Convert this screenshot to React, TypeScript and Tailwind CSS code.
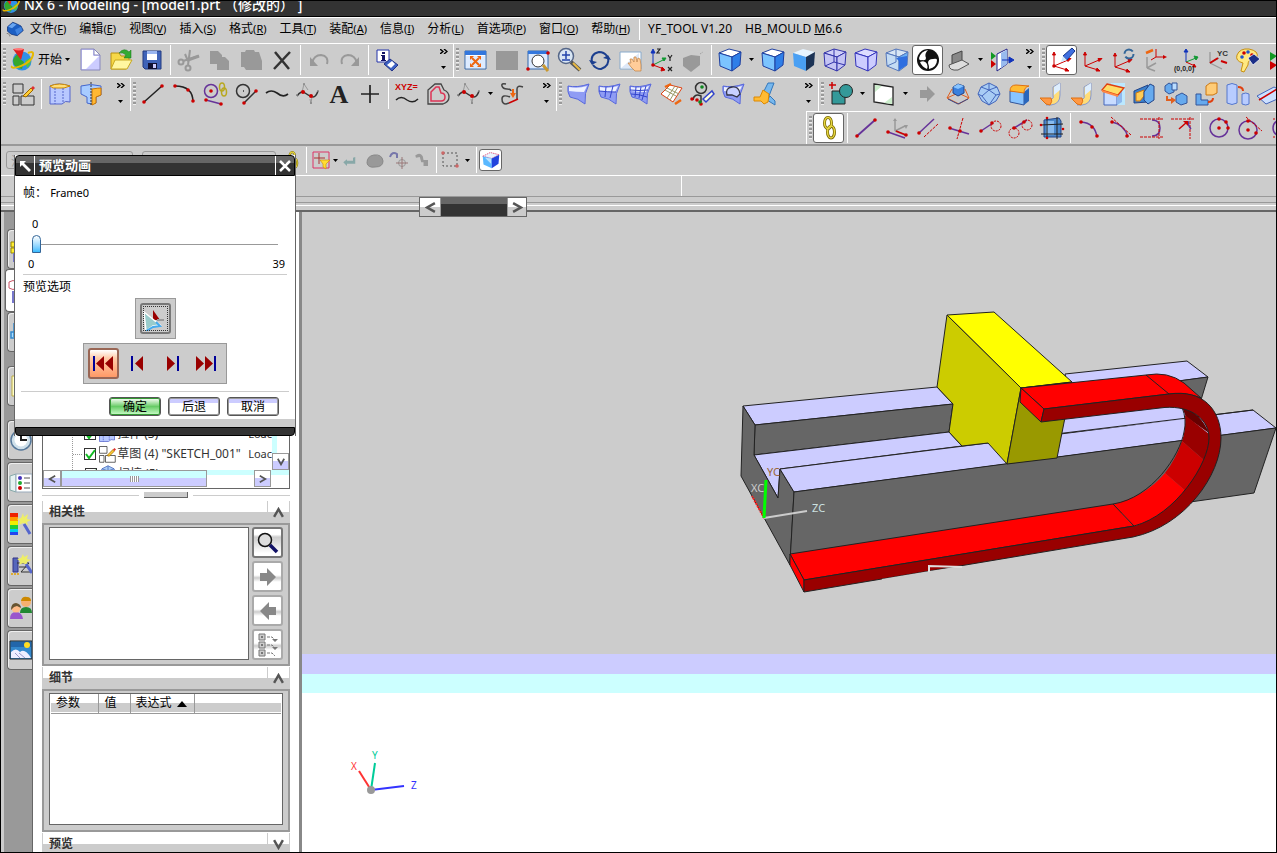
import { useState } from "react";
import type { ReactNode } from "react";

const RED = "#cc0000";
const GRAY = "#999999";
const PURPLE = "#663399";

function Dots({ at, r = 1.8, fill = RED }: { at: [number, number][]; r?: number; fill?: string }) {
  return (
    <>
      {at.map(([x, y]) => (
        <circle key={`${x}-${y}`} cx={x} cy={y} r={r} fill={fill} stroke="none" />
      ))}
    </>
  );
}

function Cube({ top, left, right, stroke = "#1f3f9f" }: { top: string; left: string; right: string; stroke?: string }) {
  return (
    <g stroke={stroke} strokeLinejoin="round">
      <path d="M1 5 11 1l12 3-9 5z" fill={top} />
      <path d="M1 5l13 4v14L2 18z" fill={left} />
      <path d="M14 9l9-5-1 13-8 6z" fill={right} />
    </g>
  );
}

function Arrow({ d, color, head }: { d: string; color: string; head: string }) {
  return (
    <>
      <path d={d} stroke={color} fill="none" />
      <path d={head} fill={color} stroke={color} />
    </>
  );
}

function Axes({ color = RED, x = 4, y = 18 }: { color?: string; x?: number; y?: number }) {
  return (
    <g transform={`translate(${x} ${y})`}>
      <Arrow d="M0 0v-12" color={color} head="M-1.500 -11h3L0 -14z" />
      <Arrow d="M0 0l14-6" color={color} head="M13 -7.500l4 0-3 3z" />
      <Arrow d="M0 0l13 4" color={color} head="M12 2l3 3-4 0z" />
    </g>
  );
}

function Sheet({ lines = "" }: { lines?: string }) {
  return (
    <>
      <path d="M1 4Q10 6 22 2 17 11 18 22 11 16 3 15 0 10 1 4z" fill="#8f9cf4" stroke="#5566dd" />
      <path d="M2 5Q11 7 20 4l-3 6Q9 10 2 9z" fill="#eef2ff" />
      <path d={lines} stroke="#3344cc" fill="none" />
    </>
  );
}

const icons: Record<string, ReactNode> = {
  orb: (
    <>
      <circle cx="12" cy="13" r="9.500" fill="#2f8fe8" />
      <path d="M4 10q4-6 8-5l-2 6 4 3-2 7Q3 20 3 12z" fill="#36a82c" />
      <path d="M15 13l5-3q2 6-3 10z" fill="#52c83c" />
      <path d="M2 18C-1 23 21 17 23 7c1-5-5-2-5-2" fill="none" stroke="#e6b800" strokeWidth="2" />
      <path d="M3 1l11 0-3 11z" fill="#e02020" />
      <path d="M3 1q6-2 11 0-5 3-11 0z" fill="#ff7777" />
    </>
  ),
  part: (
    <>
      <path d="M2 9l7-6 5 2 6 3 3 6-8 7-8-2-5-4z" fill="#1c5fc4" stroke="#113377" />
      <path d="M3 9l6-5 5 2-6 5z" fill="#6aa6f0" />
      <path d="M12 13l8-4 2 5-7 6z" fill="#3f83e0" />
      <path d="M1 18h3v3h3" stroke="#666" fill="none" strokeDasharray="2 1" />
    </>
  ),
  new: (
    <>
      <path d="M3 1h13l6 6v15H3z" fill="#ccccff" stroke="#8888bb" />
      <path d="M4 2h11v6h6L8 21H4z" fill="#fff" />
      <path d="M16 1v6h6z" fill="#fff" stroke="#8888bb" />
    </>
  ),
  open: (
    <>
      <path d="M2 5h8l2 3h8v4l-3 9H2z" fill="#f6d848" stroke="#b89010" />
      <path d="M6 12h17l-5 9H2z" fill="#fff6a0" stroke="#c8a820" />
      <path d="M10 5q5-6 10-1l2-2v8h-7l2-3q-3-3-7-2z" fill="#33aa33" stroke="#117711" strokeWidth=".5" />
    </>
  ),
  save: (
    <>
      <path d="M3 3h18v18H5l-2-2z" fill="#3f63b8" stroke="#223a80" />
      <path d="M7 3h10v9H7z" fill="#fff" />
      <path d="M7 3h10v3H7z" fill="#9ab6f0" />
      <path d="M8 15h9v6H8z" fill="#111133" />
      <path d="M13 16h3v4h-3z" fill="#ccccff" />
    </>
  ),
  cut: (
    <g stroke={GRAY} fill="none" strokeWidth="2">
      <circle cx="4" cy="14" r="2.500" />
      <circle cx="11" cy="20" r="2.500" />
      <path d="M6 13l16-5M11 17l2-15M11 13l-3-7" />
      <path d="M11 12l11-4" strokeWidth="3" />
    </g>
  ),
  copy: <path d="M2 3h8l4 4v2h3l4 4v9H9v-6H2z" fill={GRAY} />,
  paste: <path d="M2 4h4l1-2h8l1 2h4l3 9v9H7l-2-3H2z" fill={GRAY} />,
  del: <path d="M5 4l14 17M20 4L4 21" stroke="#333" strokeWidth="2.500" />,
  undo: (
    <>
      <path d="M5 15q2-8 9-8 8 1 6 9" stroke={GRAY} strokeWidth="2" fill="none" />
      <path d="M3 9v9h8z" fill={GRAY} />
    </>
  ),
  redo: (
    <>
      <path d="M19 15q-2-8-9-8-8 1-6 9" stroke={GRAY} strokeWidth="2" fill="none" />
      <path d="M21 9v9h-8z" fill={GRAY} />
    </>
  ),
  info: (
    <>
      <path d="M2 2h12v12H2z" fill="#fff" stroke="#2233aa" />
      <path d="M7 4h3v2H7zM6 7h4v5h1v1H6v-1h1V8H6z" fill="#111166" />
      <path d="M9 16l6-5 8 6-6 6z" fill="#3c62c4" stroke="#223388" />
      <path d="M12 17l5-4 3 3-4 4z" fill="#fff" />
    </>
  ),
  fit: (
    <>
      <path d="M1 3h21v18H1z" fill="#fff" stroke="#3366aa" />
      <path d="M1 3h21v4H1z" fill="#3377dd" />
      <path d="M2 8h19v12H2z" fill="#ddebff" />
      <path d="M8 10l7 7M15 10l-7 7" stroke="#ee6611" strokeWidth="2" />
      <path d="M6 8h4l-4 4zM17 8h-4l4 4zM6 19h4l-4-4zM17 19h-4l4-4z" fill="#ee6611" />
    </>
  ),
  grayRect: <path d="M1 3h22v19H1z" fill={GRAY} />,
  zoomWindow: (
    <>
      <path d="M2 3h20v18H2z" fill="#ddebff" stroke="#3366aa" />
      <path d="M2 3h20v3H2z" fill="#3377dd" />
      <circle cx="12" cy="13" r="6" fill="#fff" stroke="#333" />
      <path d="M17 17l5 6" stroke="#c89830" strokeWidth="3" />
      <Dots at={[[22, 5], [2, 21]]} />
    </>
  ),
  zoom: (
    <>
      <circle cx="9" cy="8" r="7.500" fill="#d8e6f4" stroke="#556688" strokeWidth="1.500" />
      <path d="M5 7h8M9 3v8M5 12h8" stroke="#2244aa" strokeWidth="1.500" />
      <path d="M14 14l9 8" stroke="#555" strokeWidth="4" />
      <path d="M16 15l7 7" stroke="#e8b840" strokeWidth="2" />
    </>
  ),
  rotate: (
    <g fill="none" stroke="#1c3f8f" strokeWidth="2">
      <path d="M4 15Q2 6 11 4q5 0 8 4M20 9q2 9-7 12-5 0-8-4" />
      <path d="M1 12l3 5 5-3zM23 12l-3-5-5 3z" fill="#1c3f8f" stroke="none" />
    </g>
  ),
  pan: (
    <>
      <path d="M1 4h21v17H1z" fill="#fff" stroke="#88aacc" />
      <path d="M2 20L20 5v15z" fill="#dde8f8" />
      <path d="M9 15l3 0-1-4 2 0 2 3 0-5 2 0 1 5 1-4 2 1 1 6 0 6-6 0-4-4z" fill="#ffcc99" stroke="#c08040" strokeWidth=".7" />
    </>
  ),
  triad: (
    <>
      <Arrow d="M3 17V4" color="#1133bb" head="M1 5h4L3 1z" />
      <Arrow d="M3 17l12-6" color="#119933" head="M12 10l4 0-2 3z" />
      <Arrow d="M3 17l11 4" color={RED} head="M12 19l3 3-4 1z" />
      <path d="M7 1h3L7 5h3M18 7l2 3 2-3M20 10v3M18 19l4 4M22 19l-4 4" stroke="#222" fill="none" strokeWidth="1.200" />
      <Dots at={[[3, 17]]} />
    </>
  ),
  perspective: (
    <>
      <path d="M2 10l8-3 9 1 0 9-9 7-8-6z" fill={GRAY} />
      <path d="M19 6l3-2" stroke={GRAY} strokeDasharray="1 1" />
    </>
  ),
  cube: <Cube top="#ffffff" left="#7cc4ff" right="#2f7fe8" />,
  cubeDark: <Cube top="#e6f4ff" left="#4aa0f4" right="#1c3355" stroke="none" />,
  cubeWire: (
    <>
      <Cube top="#d0d0f8" left="#c4c4f4" right="#c4c4f4" stroke="#3333aa" />
      <path d="M11 1v13M2 18l9-4 11 3" stroke="#3333aa" fill="none" />
    </>
  ),
  cubeLight: <Cube top="#ddddff" left="#ccccff" right="#ccccff" stroke="#3333bb" />,
  cubePart: (
    <>
      <Cube top="#d8e6f4" left="#c4dcf4" right="#6ab0f4" stroke="#5577bb" />
      <path d="M11 10l11-2v9l-8 5v-9z" fill="#2f6fe0" />
      <path d="M11 1v13M2 18l9-4" stroke="#5577bb" fill="none" />
    </>
  ),
  yinyang: (
    <>
      <circle cx="12" cy="12" r="11" fill="#111" />
      <path d="M3 10Q5 3 12 2q-4 4-2 8 0 3-4 2-3 1-3-2z" fill="#fff" />
      <path d="M13 21q0-4-1-6 0-4 5-4 4-1 4 1 0 7-8 9z" fill="#fff" />
      <path d="M13 3q7 1 8 6-3-2-6-1-5-1-2-5z" fill="#111" />
      <path d="M4 14q5-2 7 2 1 3 0 5-5-2-7-7z" fill="#fff" />
    </>
  ),
  clip: (
    <>
      <path d="M5 16V7l10-4v10z" fill="#888" stroke="#444" />
      <path d="M2 17l13-5 7 4-11 6q-9 1-9-5z" fill="#ddd" stroke="#555" />
    </>
  ),
  section: (
    <>
      <path d="M1 4l5 4-5 4z" fill="#119922" />
      <path d="M1 12l5 4-5 4z" fill={RED} />
      <path d="M7 6l10-5v15l-10 7z" fill="#fff" stroke="#222288" />
      <path d="M11 5l6-3v14l-6 4z" fill="#99bbee" />
      <Arrow d="M12 12h8" color="#1133bb" head="M19 9l5 3-5 3z" />
    </>
  ),
  wcsPick: (
    <>
      <Axes />
      <path d="M13 8l9-8 3 3-8 9z" fill="#3f6fe0" stroke="#113388" />
      <path d="M13 8l4 4-6 2z" fill="#cfe8ff" />
      <Dots at={[[4, 18]]} />
    </>
  ),
  wcsAxes: <Axes x={4} />,
  wcsRotate: (
    <>
      <Axes x={3} y={19} />
      <circle cx="17" cy="6" r="4.500" fill="none" stroke="#336699" strokeWidth="2" strokeDasharray="11 3" />
    </>
  ),
  wcsMove: (
    <>
      <path d="M4 20V9M4 20l9-5M4 20l8 3" stroke={GRAY} strokeWidth="1.500" />
      <path d="M13 9V1M13 9h9M13 9l-5 3" stroke={RED} />
      <path d="M20 7l4 2-4 2z" fill={RED} />
      <path d="M3 5l7-3" stroke="#ee6611" strokeWidth="2.500" />
    </>
  ),
  wcsZero: (
    <>
      <Arrow d="M12 14V4" color="#1133bb" head="M10 4h4l-2-3z" />
      <Arrow d="M12 14l10-4" color="#119933" head="M20 8l4 1-2 3z" />
      <Arrow d="M12 14l9 4" color={RED} head="M20 16l2 3-3 0z" />
      <text x="0" y="23" fontSize="7" fontWeight="bold" fontFamily="Liberation Sans, sans-serif" fill="#222">(0,0,0)</text>
    </>
  ),
  wcsYc: (
    <>
      <path d="M5 15V4M5 15l12 6M5 15l9-5" stroke={GRAY} fill="none" strokeWidth="1.300" />
      <path d="M5 15l8-5M16 13l6 2" stroke={RED} strokeWidth="2" />
      <text x="12" y="8" fontSize="8" fontWeight="bold" fontFamily="Liberation Sans, sans-serif" fill="#333">YC</text>
    </>
  ),
  palette: (
    <>
      <path d="M1 7q3-7 12-6 10 2 8 8-2 4-6 3-3 0-3 5l-4 7-3-1 2-8Q-1 13 1 7z" fill="#ffe880" stroke="#c89010" />
      <Dots at={[[8, 5], [16, 7]]} />
      <Dots at={[[12, 4], [6, 9]]} fill="#2255cc" />
      <path d="M12 10l6-4 6 5-7 6z" fill="#1c2f88" stroke="#fff" strokeWidth=".7" />
    </>
  ),
  play: (
    <>
      <path d="M3 4l7 4-7 5z" fill="#119922" />
      <path d="M3 13l7 4-7 5z" fill={RED} />
    </>
  ),
  sketch: (
    <>
      <path d="M2 2h10v9H2zM2 14h6v9H2zM10 14h13v9H10z" fill="none" stroke="#333" />
      <path d="M12 14l8-8 2 2-7 7z" fill="#ffcc33" stroke="#996600" />
      <path d="M20 6l2-2 2 2-2 2z" fill="#e03030" />
    </>
  ),
  extrude: (
    <>
      <path d="M2 4q8-4 20 0v16q-5-2-8 2-6 0-12 0z" fill="#b8c8ff" stroke="#5566cc" />
      <path d="M2 4q9-4 20 0l-6 2H5z" fill="#ffdd77" stroke="#cc8800" />
      <path d="M7 6v16M15 6v15" stroke="#5566cc" strokeDasharray="2 1" />
    </>
  ),
  revolve: (
    <>
      <path d="M2 4q9-3 20 0v9l-5 2v6q-5 2-9 0v-6l-6-3z" fill="#a8ccff" stroke="#4466cc" />
      <path d="M13 7q6-1 9-1v7l-5 2v6l-4 2z" fill="#ffb833" stroke="#cc7700" />
      <path d="M12 0v24" stroke="#333" strokeDasharray="2 1" />
    </>
  ),
  line: (
    <>
      <path d="M3 20L21 4" stroke="#222" strokeWidth="1.500" />
      <Dots at={[[3, 20], [21, 4]]} />
    </>
  ),
  arc: (
    <>
      <path d="M3 4q18 0 18 16" fill="none" stroke="#222" strokeWidth="1.500" />
      <Dots at={[[3, 4], [16, 8], [21, 19]]} />
    </>
  ),
  circleChain: (
    <>
      <circle cx="8" cy="9" r="6.500" fill="none" stroke={PURPLE} strokeWidth="1.500" />
      <path d="M3 18l15 4" stroke={PURPLE} strokeWidth="1.500" />
      <Dots at={[[8, 9], [3, 18], [18, 22]]} />
      <g fill="none" stroke="#b8a820" strokeWidth="1.500">
        <ellipse cx="19" cy="5" rx="2.500" ry="4" />
        <ellipse cx="21" cy="10" rx="2.500" ry="4" />
      </g>
    </>
  ),
  circleLine: (
    <>
      <circle cx="9" cy="9" r="6.500" fill="none" stroke="#333" strokeWidth="1.500" />
      <path d="M9 9h1M10 21L22 9" stroke="#333" strokeWidth="1.500" />
      <Dots at={[[10, 21], [22, 9]]} />
    </>
  ),
  wave: <path d="M1 11q5-4 11 0 6 5 11 1" stroke="#222" fill="none" strokeWidth="1.700" />,
  spline: (
    <>
      <path d="M1 14q4-6 8-3t8 4q3 0 5-6" stroke="#333" fill="none" strokeWidth="1.500" />
      <path d="M8 2L6 10M8 2l4 6M15 22l1-8M15 22l-1-5" stroke={GRAY} />
      <Dots at={[[7, 10], [15, 14]]} r={2} />
      <Dots at={[[8, 2], [15, 21], [1, 13], [22, 9]]} r={1} fill="#888" />
    </>
  ),
  text: (
    <text x="12" y="21" textAnchor="middle" fontSize="26" fontWeight="bold" fontFamily="Liberation Serif, serif" fill="#222">A</text>
  ),
  plus: <path d="M12 3v18M3 12h18" stroke="#222" strokeWidth="1.700" />,
  xyz: (
    <>
      <text x="0" y="8" fontSize="9" fontWeight="bold" fontFamily="Liberation Sans, sans-serif" fill={RED}>XYZ=</text>
      <path d="M1 18q5-5 11 0 6 4 11-1" stroke="#222" fill="none" strokeWidth="1.500" />
    </>
  ),
  offset: (
    <>
      <path d="M2 22V8l7-6h6l3 6q5 2 5 7t-6 7z" stroke="#444" fill="none" strokeWidth="1.300" />
      <path d="M5 19V10l5-5h3l2 6q4 0 4 4t-4 4z" stroke="#dd3355" fill="none" strokeWidth="1.500" />
    </>
  ),
  bridge: (
    <>
      <path d="M6 2Q1 1 2 4t5 3 4 2M10 15Q2 12 2 17t4 5l3-1M23 5q-6-2-6 2v10" stroke="#444" fill="none" strokeWidth="1.500" />
      <path d="M9 21l9-4" stroke={RED} strokeWidth="1.500" />
      <path d="M13 7v5" stroke="#ee6611" strokeWidth="2" />
      <path d="M10 11h6l-3 5z" fill="#ee6611" />
    </>
  ),
  sheet: <Sheet />,
  sheetRuled: <Sheet lines="M8 5L7 15M15 4l-3 12M1 9q9 1 17 1" />,
  sheetMesh: <Sheet lines="M7 5L6 15M12 5l-2 11M17 4l-4 14M1 8q9 1 18 0M2 12q8 0 16 3" />,
  swept: (
    <>
      <path d="M1 12l9-9 12 3-9 14z" fill="#ffffff" stroke="#e04010" />
      <path d="M5 8l11 6M7 6l12 6M15 4L7 16M18 5l-8 13" stroke="#996" fill="none" />
      <path d="M5 5l6-3M15 22l6-4" stroke="#ee6611" strokeWidth="2.500" />
    </>
  ),
  sectionCurve: (
    <>
      <circle cx="10" cy="6" r="5.500" fill="none" stroke="#333" strokeWidth="1.500" />
      <path d="M2 18q1-7 8-4l0 6" fill="none" stroke="#333" strokeWidth="1.500" />
      <path d="M12 17l9-8 2 3-8 8z" fill="#ffd" stroke="#3344cc" strokeWidth="1.500" />
      <Dots at={[[1, 17], [6, 18], [10, 22]]} />
      <Dots at={[[11, 5], [9, 20]]} fill="#118822" />
    </>
  ),
  patch: (
    <>
      <Sheet />
      <path d="M5 13Q3 6 10 5t8 7l-3 3-5-2z" fill="#c8d0ff" stroke="#334" strokeWidth="1.300" />
    </>
  ),
  pipe: (
    <>
      <path d="M11 9l4-8h6l-5 13zM17 14l5 5v4l-8-5z" fill="#77b8ee" stroke="#3377bb" />
      <path d="M1 15h6l3-7 6 4-1 8-4 2-3-3H1z" fill="#ffbb33" stroke="#dd8800" />
    </>
  ),
  shapes: (
    <>
      <path d="M3 9h13v13H3z" fill="#339999" stroke="#222" />
      <circle cx="17" cy="9" r="6.500" fill="#339999" stroke="#222" />
      <path d="M3 0v7M0 3h7" stroke={RED} strokeWidth="1.500" />
    </>
  ),
  plane: (
    <>
      <path d="M2 2l19 3v18L2 20z" fill="#fff" stroke="#222" strokeWidth="1.300" />
      <path d="M3 3l7 1-7 6zM20 15v7l-8-1z" fill="#cceecc" />
    </>
  ),
  next: <path d="M5 8h7V4l8 8-8 8v-4H5z" fill={GRAY} />,
  copyFace: (
    <>
      <path d="M1 16l11-5 11 5-10 6zM1 16l5-9M23 16l-4-9" fill="none" stroke="#e06020" />
      <path d="M2 17l10 5 10-5" fill="none" stroke="#334488" />
      <path d="M7 5l5-3 6 2v7l-6 3-5-3z" fill="#3a80dd" stroke="#224488" />
      <path d="M7 5l5-3 6 2-6 3z" fill="#88c4ff" />
    </>
  ),
  octa: (
    <>
      <path d="M12 1l8 4 3 7-4 7-7 4-7-4-4-7 3-7z" fill="#a8ccf4" stroke="#4466bb" />
      <path d="M12 1v7l-7 6-4-2M12 8l7 5 4-1M5 14l7 9 7-10M4 5l8 3 8-3" fill="none" stroke="#4466bb" />
    </>
  ),
  boxOrange: (
    <>
      <path d="M2 9l14 1v13L2 20z" fill="#88c4ff" stroke="#335599" />
      <path d="M16 10l5-4v13l-5 4z" fill="#2a66bb" />
      <path d="M2 9q0-6 6-6l13 1q-5 1-5 7z" fill="#ffbb33" stroke="#e07010" />
    </>
  ),
  flange: (
    <>
      <path d="M14 5l7-4v12q0 9-9 10l-5 0 6-6q2-1 1-4z" fill="#ffdd77" stroke="#8899cc" />
      <path d="M1 16h11q2 3-1 7l-4-1z" fill="#ff9944" stroke="#e07010" />
      <path d="M15 5l6-4v7l-6 5z" fill="#ddeeff" />
    </>
  ),
  chamfer: (
    <>
      <path d="M10 1h14v22H10z" fill="#bbe8ff" />
      <path d="M3 10h13v13H3z" fill="#c8dcff" stroke="#4466bb" />
      <path d="M16 12l5-4v12l-5 3z" fill="#8fb8ee" />
      <path d="M6 2l17 4-6 7L1 8z" fill="#ffdd66" stroke="#e04010" strokeWidth="1.300" />
      <path d="M1 8l16 5v2L1 10z" fill="#ff8844" />
    </>
  ),
  shell: (
    <>
      <path d="M2 9l14-6v17L2 21z" fill="#3a80cc" stroke="#224488" />
      <path d="M4 11l8-3v6l-4 5-4 0z" fill="#ffcc55" stroke="#cc7711" />
      <path d="M12 10l6-8 4 2v14l-6 4-4-4z" fill="#66aaee" stroke="#224488" />
    </>
  ),
  pattern: (
    <>
      <path d="M2 4l4-3 5 3v6l-5 2-4-3zM13 14l6-3 5 3v7l-6 2-5-3z" fill="#66aaee" stroke="#335599" />
      <path d="M9 1h5v7H9z" fill="#bbddff" stroke="#335599" />
      <path d="M4 14v4h5" fill="none" stroke="#e06020" strokeWidth="2" />
      <path d="M8 15l5 3-5 4z" fill="#e06020" />
    </>
  ),
  mirror: (
    <>
      <path d="M2 12h5v6h7v5H2z" fill="#66aaee" stroke="#335599" />
      <path d="M12 4l4-3h7v10l-4 2h-7z" fill="#ffcc77" stroke="#cc7711" />
      <path d="M14 20q5 0 5-4" fill="none" stroke="#e04010" strokeWidth="2" />
    </>
  ),
  cylinders: (
    <>
      <path d="M2 3q5-3 10 0v18q-5 3-10 0zM17 12q4-2 7 0v10q-3 2-7 0z" fill="#b8ccff" stroke="#5577cc" />
      <path d="M13 5q5 0 5 4" fill="none" stroke="#e04010" strokeWidth="2" />
    </>
  ),
  trim: (
    <>
      <path d="M1 14L18 5l8 4v6L10 22z" fill="#cce0ff" stroke="#4466bb" />
      <path d="M3 18L26 4" stroke={RED} strokeWidth="1.500" />
    </>
  ),
  chain: (
    <g fill="none" stroke="#776600" strokeWidth="3">
      <ellipse cx="11" cy="7" rx="3.500" ry="5.500" />
      <ellipse cx="14" cy="16" rx="3.500" ry="6" />
      <g stroke="#e8d840" strokeWidth="1.500">
        <ellipse cx="11" cy="7" rx="3.500" ry="5.500" />
        <ellipse cx="14" cy="16" rx="3.500" ry="6" />
      </g>
    </g>
  ),
  pLine: (
    <>
      <path d="M3 20L21 4" stroke={PURPLE} strokeWidth="1.700" />
      <Dots at={[[3, 20], [21, 4]]} />
    </>
  ),
  pAxes: (
    <>
      <path d="M10 15V3M10 15l10-5M10 15l10 4" stroke={GRAY} fill="none" strokeWidth="1.500" />
      <path d="M8 5h4l-2-3zM19 9h4l-2 4z" fill={GRAY} />
      <path d="M3 16l17 6" stroke={PURPLE} strokeWidth="1.500" />
      <path d="M11 15l10 4" stroke={RED} strokeWidth="1.500" />
      <Dots at={[[3, 16], [21, 19]]} />
    </>
  ),
  pParallel: (
    <>
      <path d="M3 17L18 3" stroke={PURPLE} strokeWidth="1.500" />
      <path d="M8 21L22 8" stroke={RED} strokeDasharray="3 1" />
      <Dots at={[[3, 17]]} />
    </>
  ),
  pCross: (
    <>
      <path d="M2 12l20 6" stroke={PURPLE} strokeWidth="1.500" />
      <path d="M16 2l-6 21" stroke={RED} strokeDasharray="3 1" />
      <Dots at={[[3, 12], [13, 15]]} />
    </>
  ),
  pTangent: (
    <>
      <path d="M3 15l12-8" stroke={PURPLE} strokeWidth="1.500" />
      <circle cx="18" cy="10" r="5" fill="none" stroke={RED} strokeDasharray="2 1" />
      <Dots at={[[3, 15], [14, 7]]} />
    </>
  ),
  pTangent2: (
    <>
      <path d="M5 12L18 4" stroke={PURPLE} strokeWidth="1.500" />
      <g fill="none" stroke={RED} strokeDasharray="2 1">
        <circle cx="18" cy="9" r="5" />
        <circle cx="5" cy="17" r="5" />
      </g>
      <Dots at={[[5, 12], [15, 6]]} />
    </>
  ),
  pBox: (
    <>
      <path d="M4 4l15-2 2 3v16H4z" fill="#4a88cc" stroke="#224488" />
      <path d="M6 5h8v14H6z" fill="#88bbee" />
      <path d="M1 9l22-1M1 18h22M7 1v22M17 1v22" stroke="#222" />
      <Dots at={[[7, 2], [1, 9], [23, 13], [7, 22]]} r={1.300} />
    </>
  ),
  pArc: (
    <>
      <path d="M4 6q14 1 16 15" fill="none" stroke={PURPLE} strokeWidth="1.500" />
      <Dots at={[[4, 6], [15, 11], [20, 20]]} />
    </>
  ),
  pArcTan: (
    <>
      <path d="M4 6q12 2 16 15" fill="none" stroke={PURPLE} strokeWidth="1.500" />
      <path d="M3 1l20 18" stroke={RED} strokeDasharray="3 1" />
      <Dots at={[[4, 6], [19, 20]]} />
    </>
  ),
  pFillet: (
    <>
      <path d="M13 4q8 0 8 8t-8 8" fill="none" stroke={PURPLE} strokeWidth="1.500" />
      <path d="M1 3h23M1 21h23M20 1v22" stroke={RED} strokeDasharray="3 1" fill="none" />
    </>
  ),
  pCorner: (
    <>
      <path d="M1 3h23M20 1v22" stroke={RED} strokeDasharray="3 1" fill="none" />
      <path d="M18 5q0 5 3 8" stroke={PURPLE} fill="none" strokeWidth="1.500" />
      <path d="M9 13l8-7" stroke={RED} strokeWidth="1.500" />
      <path d="M13 5h5v5z" fill={RED} />
    </>
  ),
  pCircle: (
    <>
      <circle cx="12" cy="12" r="9" fill="none" stroke={PURPLE} strokeWidth="1.500" />
      <Dots at={[[12, 3], [19, 6], [21, 12], [12, 12]]} />
    </>
  ),
  pCircleTan: (
    <>
      <circle cx="10" cy="14" r="9" fill="none" stroke={PURPLE} strokeWidth="1.500" />
      <path d="M8 1l16 14" stroke={RED} strokeDasharray="3 1" />
      <Dots at={[[10, 5], [18, 17], [10, 14]]} />
    </>
  ),
  pArcs: (
    <>
      <path d="M12 4q-8 1-8 8t8 8" fill="none" stroke={PURPLE} strokeWidth="1.500" />
      <path d="M4 3h10M4 21h10" stroke={RED} strokeDasharray="2 1" />
    </>
  ),
  filter: (
    <>
      <path d="M4 4h16v16H4z" fill="none" stroke="#dd3366" />
      <path d="M10 5v11M5 10h11" stroke="#a33" />
      <path d="M11 12h10l-4 4v5l-3-2v-3z" fill="#ffdd33" stroke="#cc8800" strokeWidth=".6" />
    </>
  ),
  back: <path d="M3 15l5-4v2h8V9l3-1v9H8v3z" fill="#88a8a8" />,
  blob: <path d="M4 15q0-7 7-8 8-1 9 6 0 6-8 6-7 1-8-4z" fill="#999" stroke="#888" />,
  snap: (
    <>
      <path d="M3 9q2-6 7-3v4" stroke="#7777aa" strokeWidth="2" fill="none" />
      <circle cx="15" cy="15" r="3.500" fill="none" stroke="#999" />
      <path d="M15 9v12M9 15h12" stroke="#977" />
    </>
  ),
  snap2: <path d="M3 6q6-5 10 1l1 5h6v8h-6v-5h-3L9 8 4 9z" fill={GRAY} />,
  marquee: (
    <>
      <path d="M5 5h14v13H5z" fill="none" stroke="#555" strokeDasharray="2 2" />
      <Dots at={[[5, 5], [19, 18]]} fill="#c66" />
    </>
  ),
  cubeSmall: (
    <>
      <path d="M1 7l10-5 12 3-10 5z" fill="#e8f4ff" stroke="#dd3366" strokeDasharray="2 1" />
      <path d="M1 7l12 3v13L2 18z" fill="#5ab8ff" />
      <path d="M13 10l10-5-1 12-9 6z" fill="#2244dd" />
      <path d="M4 9l8 8v-7z" fill="#bfe4ff" />
    </>
  ),
  // resource bar
  navAssembly: (
    <>
      <path d="M2 5h8v5H2zM2 11h8v5H2z" fill="#ffee33" stroke="#998800" />
      <path d="M5 16v8h8" stroke="#7777cc" strokeWidth="2" fill="none" />
    </>
  ),
  navPart: (
    <>
      <path d="M1 3q4-3 8 0v6q-4 3-8 0z" fill="#fff" stroke="#cc5566" />
      <path d="M5 12v12M5 17h8" stroke="#7777cc" strokeWidth="2" />
    </>
  ),
  navReuse: <path d="M5 3v14M2 12h6v6H2zM8 18h8" fill="#aaddff" stroke="#3388cc" strokeWidth="1.500" />,
  navNote: <path d="M3 2h16v20H3z" fill="#ffffcc" stroke="#bbaa44" />,
  navClock: (
    <>
      <circle cx="12" cy="12" r="10" fill="#cfe0ea" stroke="#557799" strokeWidth="1.500" />
      <circle cx="12" cy="12" r="6.500" fill="#fff" />
      <path d="M12 5v7h6" stroke="#222" strokeWidth="2" fill="none" />
    </>
  ),
  navRoles: (
    <>
      <path d="M1 6l6-2v18l-6-2z" fill="#e6f2f2" stroke="#88aaaa" />
      <path d="M7 4h16v18H7z" fill="#fff" stroke="#99aabb" />
      <Dots at={[[11, 8]]} fill="#4433bb" r={2} />
      <Dots at={[[11, 13]]} fill="#22aa33" r={2} />
      <Dots at={[[11, 18]]} r={2} />
      <path d="M15 8h6M15 13h6M15 18h6" stroke="#555" />
    </>
  ),
  navColors: (
    <>
      <path d="M1 1h8v4H1z" fill="#ee2200" />
      <path d="M1 5h8v4H1z" fill="#ff9900" />
      <path d="M1 9h8v4H1z" fill="#eeee00" />
      <path d="M1 13h8v4H1z" fill="#22cc33" />
      <path d="M1 17h8v3H1z" fill="#00ccee" />
      <path d="M1 20h8v3H1z" fill="#2244ee" />
      <path d="M14 1l1 4 4-3-1 5 4 1-4 2 1 3-5-2-4 2 1-4-3-2 4-1z" fill="#eeee66" />
      <path d="M15 12l6 10" stroke="#5566cc" strokeWidth="3" />
    </>
  ),
  navWizard: (
    <>
      <path d="M4 4h5v14H4z" fill="#5566bb" stroke="#333388" />
      <path d="M8 9h12l-8 9h10M10 13h8" stroke="#333" fill="none" />
      <path d="M14 0l1 3 4-2-1 4 4 1-4 2 0 3-4-2-4 2 1-4-3-2 4-1z" fill="#eeee66" />
      <path d="M17 10l6 9" stroke="#5566cc" strokeWidth="3" />
      <path d="M2 20h9" stroke="#ddaa33" strokeWidth="2" strokeDasharray="2 1" />
    </>
  ),
  navPeople: (
    <>
      <path d="M11 17q0-6 6-6t6 6z" fill="#228833" />
      <circle cx="17" cy="6" r="5" fill="#f4b070" />
      <path d="M12 5q1-5 6-4 4 0 4 4z" fill="#cc8800" />
      <path d="M1 23q0-7 6-7t7 7z" fill="#9955cc" />
      <circle cx="7" cy="12" r="4.500" fill="#ffbb88" />
      <path d="M2 14q0-7 5-7 5 1 5 5l-4-2-3 1z" fill="#665533" />
    </>
  ),
  navPicture: (
    <>
      <path d="M1 3h22v18H1z" fill="#3388cc" stroke="#222" />
      <path d="M2 4h20v5H2z" fill="#2266aa" />
      <circle cx="18" cy="7" r="3" fill="#ffdd22" />
      <path d="M2 20v-6q5-5 9 0 5-4 11 6z" fill="#eef" />
      <path d="M10 15l6 5M6 15l5 5" stroke="#9999cc" />
    </>
  ),
};

function Icon({ name, small }: { name: string; small?: boolean }) {
  return (
    <svg viewBox="0 0 24 24" className={small ? "h-[18px] w-[18px] shrink-0 overflow-visible" : "h-6 w-6 shrink-0 overflow-visible"} aria-hidden="true">
      {icons[name]}
    </svg>
  );
}

function Caret() {
  return (
    <svg viewBox="0 0 5 3" className="h-[3px] w-[5px] shrink-0" aria-hidden="true">
      <path d="M0 0h5L2.500 3z" fill="#000" />
    </svg>
  );
}

function Grip() {
  return (
    <div className="flex w-[6px] shrink-0 justify-center">
      <div className="h-[24px] w-[3px] bg-[repeating-linear-gradient(#999_0_2px,#eee_2px_3px,#ccc_3px_4px)]" />
    </div>
  );
}

// "|" is a separator, "v" a drop-down arrow, a leading "*" marks a pressed tool
function Tools({ items }: { items: string[] }) {
  return (
    <>
      {items.map((item, i) => {
        if (item === "|") {
          return <div key={i} className="mx-[2px] h-[30px] w-[2px] shrink-0 border-r border-white" />;
        }
        if (item === "v") {
          return (
            <button key={i} aria-label="more" className="flex h-[30px] w-[12px] shrink-0 items-center justify-center">
              <Caret />
            </button>
          );
        }
        const pressed = item.startsWith("*");
        const name = pressed ? item.slice(1) : item;
        return (
          <button
            key={i}
            aria-label={name}
            aria-pressed={pressed}
            className={`flex h-[30px] w-[31px] shrink-0 items-center justify-center ${pressed ? "rounded-[3px] border border-[#666] bg-white" : ""}`}
          >
            <Icon name={name} />
          </button>
        );
      })}
    </>
  );
}

function Overflow() {
  return (
    <button aria-label="toolbar options" className="ml-auto flex h-full w-[19px] shrink-0 flex-col items-center justify-between pt-[5px] pb-[6px]">
      <svg viewBox="0 0 8 5" className="h-[5px] w-[8px]" aria-hidden="true">
        <path d="M0 0l3 2.500L0 5M4 0l3 2.500L4 5" fill="none" stroke="#000" strokeWidth="1.400" />
      </svg>
      <Caret />
    </button>
  );
}

const menus = [
  ["文件", "F"],
  ["编辑", "E"],
  ["视图", "V"],
  ["插入", "S"],
  ["格式", "R"],
  ["工具", "T"],
  ["装配", "A"],
  ["信息", "I"],
  ["分析", "L"],
  ["首选项", "P"],
  ["窗口", "O"],
  ["帮助", "H"],
];

function TopBars() {
  return (
    <header className="shrink-0">
      <div className="flex h-[16px] items-end overflow-hidden border-b border-black bg-[#333] pl-[1px] text-white">
        <div className="mb-[2px] flex items-center gap-[4px]">
          <Icon name="orb" small />
          <h1 className="text-[14px] leading-[18px] font-medium whitespace-pre">NX 6 - Modeling - [model1.prt （修改的） ]</h1>
        </div>
      </div>

      <nav className="flex h-[26px] items-center border-t border-white pb-[3px] pl-[5px]">
        <Icon name="part" small />
        <div className="ml-[6px] flex gap-[13px]">
          {menus.map(([label, key]) => (
            <button key={key} className="whitespace-nowrap">
              {label}
              <span className="text-[11px]">
                (<u>{key}</u>)
              </span>
            </button>
          ))}
        </div>
        <div className="ml-[9px] h-[21px] border-l border-white" />
        <button className="ml-[8px] whitespace-nowrap">YF_TOOL V1.20</button>
        <button className="ml-[13px] whitespace-nowrap">
          HB_MOULD <u>M</u>6.6
        </button>
      </nav>

      <div className="flex h-[34px] overflow-hidden border-t border-white">
        <div className="flex w-[452px] shrink-0 items-center pb-[2px]">
          <Grip />
          <button className="flex h-[30px] items-center pr-[4px] pl-[3px]">
            <Icon name="orb" />
            <span className="mr-[3px] ml-[4px] whitespace-nowrap">开始</span>
            <Caret />
          </button>
          <Tools items={["new", "open", "save", "|", "cut", "copy", "paste", "del", "|", "undo", "redo", "|", "info"]} />
          <Overflow />
        </div>
        <div className="flex w-[586px] shrink-0 items-center border-l border-white pb-[2px]">
          <Grip />
          <Tools
            items={["fit", "grayRect", "zoomWindow", "zoom", "rotate", "pan", "triad", "perspective", "|", "cube", "v", "cube", "cubeDark", "cubeWire", "cubeLight", "cubePart", "*yinyang", "clip", "v", "section"]}
          />
          <Overflow />
        </div>
        <div className="flex min-w-0 flex-1 items-center overflow-hidden border-l border-white pb-[2px]">
          <Grip />
          <Tools items={["*wcsPick", "wcsAxes", "wcsRotate", "wcsMove", "wcsZero", "wcsYc", "palette", "play"]} />
        </div>
      </div>

      <div className="flex h-[34px] overflow-hidden border-t border-white">
        <div className="flex w-[129px] shrink-0 items-center pb-[2px]">
          <Grip />
          <Tools items={["sketch", "|", "extrude", "revolve"]} />
          <Overflow />
        </div>
        <div className="flex w-[426px] shrink-0 items-center border-l border-white pb-[2px]">
          <Grip />
          <Tools items={["line", "arc", "circleChain", "circleLine", "wave", "spline", "text", "plus", "|", "xyz", "offset", "spline", "v", "bridge"]} />
          <Overflow />
        </div>
        <div className="flex w-[262px] shrink-0 items-center border-l border-white pb-[2px]">
          <Grip />
          <Tools items={["sheet", "sheetRuled", "sheetMesh", "swept", "sectionCurve", "patch", "pipe"]} />
          <Overflow />
        </div>
        <div className="flex min-w-0 flex-1 items-center overflow-hidden border-l border-white pb-[2px]">
          <Grip />
          <Tools
            items={["shapes", "v", "plane", "v", "next", "copyFace", "octa", "boxOrange", "flange", "flange", "chamfer", "shell", "pattern", "mirror", "cylinders", "trim"]}
          />
        </div>
      </div>

      <div className="flex h-[34px] border-b border-[#999] pl-[805px]">
        <div className="flex min-w-0 flex-1 items-center overflow-hidden border-t border-l border-white">
          <Grip />
          <Tools
            items={["*chain", "|", "pLine", "pAxes", "pParallel", "pCross", "pTangent", "pTangent2", "pBox", "|", "pArc", "pArcTan", "pFillet", "pCorner", "|", "pCircle", "pCircleTan", "pArcs"]}
          />
        </div>
      </div>

      <div className="flex h-[30px] items-center border-t border-[#999] pb-[1px] pl-[5px] text-[#999]">
        <select aria-label="类型过滤器" className="h-[18px] w-[127px] rounded-[3px] border border-[#999] bg-[#ccc]">
          <option>没有选择过滤器</option>
        </select>
        <select aria-label="选择范围" className="ml-[9px] h-[18px] w-[134px] rounded-[3px] border border-[#999] bg-[#ccc]">
          <option>仅在工作部件内部</option>
        </select>
        <div className="ml-[8px] flex w-[18px] justify-center">
          <Icon name="chain" small />
        </div>
        <div className="mx-[4px] h-[26px] border-r border-white" />
        <button aria-label="filter" className="flex w-[20px] justify-center"><Icon name="filter" /></button>
        <button aria-label="filter list" className="flex w-[8px] justify-center"><Caret /></button>
        <button aria-label="back" className="flex w-[22px] justify-center"><Icon name="back" small /></button>
        <button aria-label="selection" className="flex w-[28px] justify-center"><Icon name="blob" /></button>
        <button aria-label="snap point" className="flex w-[20px] justify-center"><Icon name="snap" /></button>
        <button aria-label="snap face" className="flex w-[25px] justify-center"><Icon name="snap2" small /></button>
        <div className="mr-[3px] ml-[2px] h-[26px] border-r border-white" />
        <button aria-label="marquee" className="flex w-[20px] justify-center"><Icon name="marquee" /></button>
        <button aria-label="marquee list" className="flex w-[14px] justify-center"><Caret /></button>
        <div className="mr-[2px] ml-[2px] h-[26px] border-r border-white" />
        <button aria-label="highlight" className="flex h-[22px] w-[23px] items-center justify-center rounded-[3px] border border-[#666] bg-white">
          <Icon name="cubeSmall" small />
        </button>
      </div>

      <div className="flex h-[21px] border-t border-white">
        <div className="w-[681px] border-r border-white" />
      </div>

      <div className="relative h-[16px] border-t border-b-2 border-t-[#999] border-b-[#666]">
        <div className="mt-[5px] h-[4px] border-t border-b border-t-[#999] border-b-white" />
        <div className="absolute top-0 left-[418px] z-10 flex h-[20px] w-[108px] border border-[#666]">
          <button aria-label="scroll left" className="flex w-[20px] items-center justify-center bg-linear-to-b from-white from-50% to-[#ccc] to-50%">
            <Chevron dir="left" />
          </button>
          <div className="flex-1 border-x border-[#999] bg-linear-to-b from-[#666] from-35% to-[#333] to-35%" />
          <button aria-label="scroll right" className="flex w-[18px] items-center justify-center bg-linear-to-b from-white from-50% to-[#ccc] to-50%">
            <Chevron dir="right" />
          </button>
        </div>
      </div>
    </header>
  );
}

const chevrons = {
  left: "M9 1L2 5l7 4",
  right: "M1 1l7 4-7 4",
  up: "M1 9l4-7 4 7",
  down: "M1 1l4 7 4-7",
};

function Chevron({ dir, thin }: { dir: keyof typeof chevrons; thin?: boolean }) {
  return (
    <svg viewBox="0 0 10 10" className={thin ? "h-[8px] w-[8px]" : "h-[11px] w-[11px]"} aria-hidden="true">
      <path d={chevrons[dir]} fill="none" stroke="#555" strokeWidth="2.200" />
    </svg>
  );
}

function ResourceTab({ icon, active }: { icon: string; active?: boolean }) {
  return (
    <button
      aria-label={icon}
      className={
        active
          ? "flex h-[43px] w-[27px] shrink-0 items-center justify-center self-end rounded-l-[4px] border border-r-0 border-[#666] bg-white pl-[2px]"
          : "flex h-[40px] w-[25px] shrink-0 items-center justify-center self-end rounded-l-[4px] border border-r-0 border-[#666] bg-[#ccc] pl-[1px] shadow-[inset_1px_1px_0_#eee]"
      }
    >
      <Icon name={icon} />
    </button>
  );
}

function ResourceBar() {
  return (
    <div className="flex w-[32px] shrink-0 flex-col overflow-hidden border-r border-l-[3px] border-r-[#666] border-l-[#ccc] bg-[#999]">
      <div className="flex flex-col pt-[17px]">
        <ResourceTab icon="navAssembly" />
        <ResourceTab icon="navPart" active />
        <ResourceTab icon="navReuse" />
      </div>
      <div className="flex flex-col pt-[14px]">
        <ResourceTab icon="navNote" />
      </div>
      <div className="flex flex-col gap-[2px] pt-[14px]">
        <ResourceTab icon="navClock" />
        <ResourceTab icon="navRoles" />
        <ResourceTab icon="navColors" />
        <ResourceTab icon="navWizard" />
        <ResourceTab icon="navPeople" />
        <ResourceTab icon="navPicture" />
      </div>
    </div>
  );
}

const treeRows = [
  { icon: "extrude", label: "拉伸 (3)", status: "Loac" },
  { icon: "sketch", label: '草图 (4) "SKETCH_001"', status: "Loac" },
  { icon: "octa", label: "扫掠 (5)", status: "" },
];

function ModelTree() {
  return (
    <div className="flex h-[277px] shrink-0 flex-col border border-[#666] bg-white text-[#333]">
      <div className="flex min-h-0 flex-1">
        <div className="flex min-w-0 flex-1 flex-col justify-end overflow-hidden">
          <div className="ml-[29px] h-[46px] border-l border-dotted border-[#999]">
            {treeRows.map((row) => (
              <div key={row.label} className="flex h-[20px] items-center">
                <div className="w-[10px] border-t border-dotted border-[#999]" />
                <input
                  type="checkbox"
                  defaultChecked
                  aria-label={row.label}
                  className="peer ml-[2px] h-[12px] w-[12px] shrink-0 appearance-none border border-[#333] bg-white"
                />
                <svg viewBox="0 0 12 12" className="-ml-[12px] h-[12px] w-[12px] shrink-0 opacity-0 peer-checked:opacity-100" aria-hidden="true">
                  <path d="M2 6l3 4 6-8" fill="none" stroke="#11bb22" strokeWidth="2" />
                </svg>
                <span className="ml-[2px] flex w-[17px] justify-center">
                  <Icon name={row.icon} small />
                </span>
                <span className="ml-[2px] w-[131px] shrink-0 text-[12px] whitespace-nowrap">{row.label}</span>
                <span className="text-[11px]">{row.status}</span>
              </div>
            ))}
          </div>
        </div>
        <div className="flex w-[17px] shrink-0 flex-col justify-end bg-linear-to-r from-[#ccffff] from-30% to-white to-30%">
          <button aria-label="scroll down" className="flex h-[17px] items-center justify-center border border-[#999] bg-linear-to-b from-white from-50% to-[#ccccff] to-50%">
            <Chevron dir="down" thin />
          </button>
        </div>
      </div>
      <div className="flex h-[18px] shrink-0 bg-linear-to-b from-[#ccffff] from-30% to-white to-30% pr-[18px] pb-[1px]">
        <button aria-label="scroll left" className="flex w-[18px] items-center justify-center border border-[#999] bg-linear-to-b from-white from-50% to-[#ccccff] to-50%">
          <Chevron dir="left" thin />
        </button>
        <div className="flex w-[146px] items-center justify-center gap-[1px] border border-[#999] bg-linear-to-b from-[#ccffff] from-50% to-[#ccccff] to-50%">
          <span className="h-[6px] w-[9px] bg-[repeating-linear-gradient(90deg,#999_0_1px,#fff_1px_2px)]" />
        </div>
        <button aria-label="scroll right" className="ml-auto flex w-[17px] items-center justify-center border border-[#999] bg-linear-to-b from-white from-50% to-[#ccccff] to-50%">
          <Chevron dir="right" thin />
        </button>
      </div>
    </div>
  );
}

function SectionHeader({ title, dir }: { title: string; dir: "up" | "down" }) {
  return (
    <div className="flex h-[22px] shrink-0 items-center border-x border-[#ccc] bg-linear-to-b from-white from-50% to-[#ccc] to-50% pl-[6px]">
      <h2 className="flex-1 font-bold text-[#333]">{title}</h2>
      <button aria-label={title} className="flex h-full w-[22px] items-center justify-center border-l border-[#ccc]">
        <Chevron dir={dir} />
      </button>
    </div>
  );
}

function SideButton({ label, active, children }: { label: string; active?: boolean; children: ReactNode }) {
  return (
    <button
      aria-label={label}
      className={`flex h-[31px] w-[31px] items-center justify-center rounded-[3px] border-2 bg-linear-to-b ${active ? "border-[#777] from-white from-20% via-[#ccc] via-30% to-white to-90%" : "border-[#aaa] from-white from-45% via-[#ccc] via-55% to-white to-70%"}`}
    >
      <svg viewBox="0 0 24 24" className="h-6 w-6" aria-hidden="true">
        {children}
      </svg>
    </button>
  );
}

function NavigatorPanel() {
  return (
    <aside className="flex w-[266px] shrink-0 flex-col overflow-hidden bg-white pr-[9px] pl-[9px]">
      <ModelTree />
      <div className="flex h-[12px] shrink-0 items-center justify-between">
        <div className="w-[97px] border-t border-[#ccc]" />
        <div className="h-[6px] w-[44px] border-r border-b border-[#666] bg-[#ccc]" />
        <div className="w-[97px] border-t border-[#ccc]" />
      </div>

      <SectionHeader title="相关性" dir="up" />
      <div className="mb-[1px] flex h-[143px] shrink-0 gap-[3px] border-2 border-[#999] bg-[#ccc] px-[5px] pt-[2px] pb-[4px]">
        <div className="flex-1 border border-[#666] bg-white" />
        <div className="flex flex-col justify-between">
          <SideButton label="查找" active>
            <circle cx="9" cy="9" r="6.500" fill="#ddd" stroke="#111" strokeWidth="1.500" />
            <path d="M14 14l7 7" stroke="#111166" strokeWidth="3.500" />
          </SideButton>
          <SideButton label="前进">
            <path d="M4 8h7V3l9 9-9 9v-5H4z" fill="#888" />
          </SideButton>
          <SideButton label="后退">
            <path d="M20 8h-7V3l-9 9 9 9v-5h7z" fill="#888" />
          </SideButton>
          <SideButton label="列表">
            <path d="M3 1h6v6H3zM3 9h6v6H3zM3 17h6v6H3z" fill="#ccc" stroke="#777" />
            <path d="M5 3h2v2H5zM5 11h2v2H5zM5 19h2v2H5z" fill="#777" />
            <path d="M11 4h5l3 3M11 12h5l3 3M11 20h5l3 3" stroke="#777" fill="none" strokeDasharray="3 1" />
            <path d="M16 6h6l-3 3zM16 14h6l-3 3z" fill="#777" />
          </SideButton>
        </div>
      </div>

      <SectionHeader title="细节" dir="up" />
      <div className="mb-[1px] flex h-[143px] shrink-0 flex-col border-2 border-[#999] bg-[#ccc] px-[5px] pt-[2px] pb-[5px]">
        <div className="flex-1 border border-[#666] bg-white px-[1px]">
          <table className="w-full table-fixed text-left">
            <thead>
              <tr className="h-[19px] border-b border-[#999] bg-linear-to-b from-white from-50% to-[#ccc] to-50%">
                <th className="w-[47px] border-r border-[#999] pl-[5px] leading-[18px] font-normal">参数</th>
                <th className="w-[32px] border-r border-[#999] pl-[6px] leading-[18px] font-normal">值</th>
                <th className="w-[64px] border-r border-[#999] pl-[5px] leading-[18px] font-normal whitespace-nowrap">
                  表达式{" "}
                  <svg viewBox="0 0 10 6" className="ml-[2px] inline h-[6px] w-[10px]" aria-hidden="true">
                    <path d="M0 6h10L5 0z" fill="#000" />
                  </svg>
                </th>
                <th aria-label="空" />
              </tr>
            </thead>
          </table>
        </div>
      </div>

      <SectionHeader title="预览" dir="down" />
    </aside>
  );
}

function SliderModel() {
  return (
    <svg viewBox="735 300 541 300" className="h-[300px] w-[541px] shrink-0" aria-label="model">
      <g stroke="#222" strokeWidth="1" strokeLinejoin="round">
        {/* base with the two rails */}
        <path d="M743 406L937 387 953 404 755 425z" fill="#ccccff" />
        <path d="M755 425L953 404 949 432 754 455z" fill="#666" />
        <path d="M754 455L949 432 962 446 780 469 778 498z" fill="#ccccff" />
        <path d="M743 406l12 19-1 30 24 43 2-29 14 23-4 73-49-89z" fill="#666" />
        <path d="M780 469L988 443 1253 410 1276 428 1007 464 794 492z" fill="#ccccff" />
        <path d="M1062 400L1190 385 1190 419 1055 434z" fill="#ccccff" stroke="none" />
        <path d="M1060 433.500L1253 410" />
        <path d="M1065 374L1187 361 1208 377 1070 396z" fill="#ccccff" />
        <path d="M1208 377L1201 400 1178 381z" fill="#666" />
        <path d="M794 492L1276 428 1254 493 1190 502 790 562z" fill="#666" />
        {/* yellow block */}
        <path d="M947 315L994 312 1072 382 1021 388z" fill="#ffff00" />
        <path d="M947 315L1021 388 1007 464 988 443 962 446 949 432 953 404 937 387z" fill="#cccc00" />
        <path d="M1021 388L1072 382 1057 458 1007 464z" fill="#999900" />
        {/* inside of the bend, shaded in strips */}
        <path d="M1182 407Q1200 412 1209 433L1186 417z" fill="#660000" stroke="none" />
        <path d="M1185 415L1209 434Q1210 448 1205 461L1182 441Q1186 430 1185 415z" fill="#990000" stroke="none" />
        <path d="M1182 441L1205 461Q1199 478 1188 493L1165 473Q1176 459 1182 441z" fill="#cc0000" stroke="none" />
        <path d="M1165 473L1188 493Q1165 520 1134 526L1113 504Q1145 497 1165 473z" fill="#ff0000" stroke="none" />
        <path d="M1182 407Q1187 420 1184 432C1180 455 1152 498 1113 504" fill="none" />
        {/* top faces of the red hook */}
        <path d="M1021 388L1146 375Q1168 371 1184 383L1201 398Q1187 392 1169 394L1044 409z" fill="#ff0000" />
        <path d="M1021 388L1044 409 1041 422 1020 402z" fill="#ff0000" />
        <path d="M790 554L1113 504 1134 526 804 580z" fill="#ff0000" />
        <path d="M790 554L804 580 804 592 790 565z" fill="#ff0000" />
        <path d="M1146 375L1169 394" />
        {/* side band running round the hook */}
        <path
          d="M1044 409L1169 394C1203 389 1221 410 1221 438C1221 475 1185 526 1133 537L804 592V580L1134 526C1176 515 1209 463 1209 438C1209 417 1187 404 1160 408L1041 422z"
          fill="#990000"
        />
      </g>
      <path d="M882 580L930 572 962 567" stroke="#ccc" strokeWidth="2" fill="none" />
      <path d="M929 572v-6l33 1" stroke="#ddd" strokeWidth="2" fill="none" />
      <g fontFamily="Noto Sans, sans-serif" fontSize="11">
        <text x="767" y="476" fill="#996633">YC</text>
        <text x="751" y="492" fill="#ccc">XC</text>
        <text x="812" y="512" fill="#cce0e0">ZC</text>
      </g>
      <path d="M764 518L807 511" stroke="#ccc" strokeWidth="2" />
      <path d="M764 518L752 496" stroke="#ff2222" strokeWidth="2" strokeDasharray="2 1" />
      <path d="M764 518L766 480" stroke="#00ff00" strokeWidth="3" />
    </svg>
  );
}

function ViewTriad() {
  return (
    <svg viewBox="345 745 80 55" className="h-[55px] w-[80px]" aria-label="view axes">
      <path d="M371 790L359 771" stroke="#ff3333" strokeWidth="2" />
      <path d="M371 790L375 763" stroke="#00cc99" strokeWidth="2" />
      <path d="M371 790L404 786" stroke="#3333ff" strokeWidth="2" />
      <circle cx="371" cy="790" r="4" fill="#999" />
      <g fontFamily="Noto Sans, sans-serif" fontSize="10">
        <text x="351" y="770" fill="#ff3333">X</text>
        <text x="372" y="759" fill="#00cc99">Y</text>
        <text x="411" y="789" fill="#3333ff">Z</text>
      </g>
    </svg>
  );
}

function Viewport() {
  return (
    <main className="flex min-w-0 flex-1 flex-col border-l-[3px] border-[#888]">
      <div className="flex flex-1 items-end justify-end overflow-hidden bg-[#ccc] pb-[54px]">
        <SliderModel />
      </div>
      <div className="h-[20px] shrink-0 bg-[#ccccff]" />
      <div className="h-[19px] shrink-0 bg-[#ccffff]" />
      <div className="flex h-[159px] shrink-0 items-start bg-white pt-[52px] pl-[43px]">
        <ViewTriad />
      </div>
    </main>
  );
}

const playback = [
  { id: "first", shape: <><path d="M2 4v15" stroke="#000099" strokeWidth="2" /><path d="M12 4v15l-8-7.500zM21 4v15l-8-7.500z" fill="#990000" /></> },
  { id: "prev", shape: <><path d="M6 4v15" stroke="#000099" strokeWidth="2" /><path d="M17 4v15l-8-7.500z" fill="#990000" /></> },
  { id: "next", shape: <><path d="M18 4v15" stroke="#000099" strokeWidth="2" /><path d="M7 4v15l8-7.500z" fill="#990000" /></> },
  { id: "last", shape: <><path d="M21 4v15" stroke="#000099" strokeWidth="2" /><path d="M2 4v15l8-7.500zM11 4v15l8-7.500z" fill="#990000" /></> },
];

function AnimationDialog() {
  const [frame, setFrame] = useState(0);

  return (
    <section className="absolute top-[154px] left-[13px] z-20 w-[282px] border-x border-[#666] bg-white" aria-label="预览动画">
      <div className="flex h-[21px] items-stretch rounded-t-[4px] border border-black bg-linear-to-b from-[#666] from-35% to-[#333] to-35% text-white">
        <div className="flex w-[19px] items-center justify-center border-r border-white">
          <svg viewBox="0 0 12 12" className="h-[12px] w-[12px]" aria-hidden="true">
            <path d="M1 1h6L5 3l7 7-2 2-7-7-2 2z" fill="#fff" />
          </svg>
        </div>
        <h2 className="flex-1 pl-[4px] text-[13px] leading-[19px] font-bold">预览动画</h2>
        <button aria-label="关闭" className="flex w-[19px] items-center justify-center border-l border-white">
          <svg viewBox="0 0 12 12" className="h-[12px] w-[12px]" aria-hidden="true">
            <path d="M1 1l10 10M11 1L1 11" stroke="#fff" strokeWidth="2.500" />
          </svg>
        </button>
      </div>

      <div className="px-[8px] text-[12px] leading-[16px]">
        <p className="pt-[9px]">
          帧： <span className="text-[11px]">Frame{frame}</span>
        </p>
        <div className="mt-[15px] pl-[9px] text-[11px]">{frame}</div>
        <input
          type="range"
          min={0}
          max={39}
          value={frame}
          onChange={(e) => setFrame(Number(e.target.value))}
          aria-label="帧"
          className="ml-[9px] block h-[24px] w-[246px] appearance-none bg-transparent bg-[linear-gradient(#999,#999)] bg-[length:100%_1px] bg-center bg-no-repeat [&::-webkit-slider-thumb]:h-[18px] [&::-webkit-slider-thumb]:w-[9px] [&::-webkit-slider-thumb]:appearance-none [&::-webkit-slider-thumb]:rounded-t-[5px] [&::-webkit-slider-thumb]:border [&::-webkit-slider-thumb]:border-[#336699] [&::-webkit-slider-thumb]:bg-linear-to-b [&::-webkit-slider-thumb]:from-white [&::-webkit-slider-thumb]:to-[#33bbff]"
        />
        <div className="flex justify-between pr-[2px] pl-[5px] text-[11px]">
          <span>0</span>
          <span>39</span>
        </div>
        <div className="mt-[2px] border-t border-[#ccc]" />
        <p className="pt-[4px]">预览选项</p>

        <div className="mx-auto mt-[3px] flex h-[41px] w-[41px] items-center justify-center border border-[#999] bg-[#ccc]">
          <button aria-label="播放" className="flex h-[31px] w-[31px] items-center justify-center rounded-[3px] border-2 border-[#777] outline-1 -outline-offset-4 outline-dotted outline-[#333]">
            <svg viewBox="0 0 24 24" className="h-6 w-6" aria-hidden="true">
              <path d="M10 3v10h7z" fill="#990000" />
              <path d="M14 13h7" stroke="#999" strokeWidth="2" />
              <path d="M1 5l16 13-7 1-7 5z" fill="#99cccc" stroke="#fff" strokeWidth="1.500" />
              <path d="M3 24l7-4 7-1-4-4" fill="none" stroke="#44aaee" strokeWidth="2" />
            </svg>
          </button>
        </div>

        <div className="mx-auto mt-[4px] flex h-[41px] w-[144px] items-center gap-[3px] border border-[#999] bg-[#ccc] pl-[4px]">
          {playback.map((b, i) => (
            <button
              key={b.id}
              aria-label={b.id}
              className={`flex h-[31px] w-[31px] items-center justify-center rounded-[3px] ${i === 0 ? "border-2 border-[#996655] bg-linear-to-b from-white via-[#ffccaa] via-30% to-[#ff9966]" : ""}`}
            >
              <svg viewBox="0 0 24 24" className="h-6 w-6 shrink-0" aria-hidden="true">
                {b.shape}
              </svg>
            </button>
          ))}
        </div>

        <div className="-mx-[2px] mt-[7px] border-t border-[#ccc]" />
        <div className="flex justify-end gap-[7px] pt-[5px] pr-[8px] pb-[3px] leading-[15px]">
          <button className="h-[19px] w-[52px] rounded-[3px] border border-[#555] bg-linear-to-b from-white via-[#66cc66] via-50% to-[#ccffcc] shadow-[inset_0_0_0_1px_#339933]">确定</button>
          <button className="h-[19px] w-[52px] rounded-[3px] border border-[#555] bg-linear-to-b from-[#ccccff] from-30% to-white to-30% shadow-[inset_0_0_0_1px_#999]">后退</button>
          <button className="h-[19px] w-[52px] rounded-[3px] border border-[#555] bg-linear-to-b from-[#ccccff] from-30% to-white to-30% shadow-[inset_0_0_0_1px_#999]">取消</button>
        </div>
      </div>
      <div className="h-[8px] bg-[#ccc]" />
      <div className="h-[9px] rounded-b-[4px] border border-black bg-[#333]" />
    </section>
  );
}

export default function App() {
  return (
    <div className="relative flex h-screen flex-col overflow-hidden border border-black bg-[#ccc] font-['Noto_Sans','Noto_Sans_CJK_SC',sans-serif] text-[12px] leading-[16px] text-black">
      <TopBars />
      <div className="flex min-h-0 flex-1">
        <ResourceBar />
        <NavigatorPanel />
        <Viewport />
      </div>
      <AnimationDialog />
    </div>
  );
}
